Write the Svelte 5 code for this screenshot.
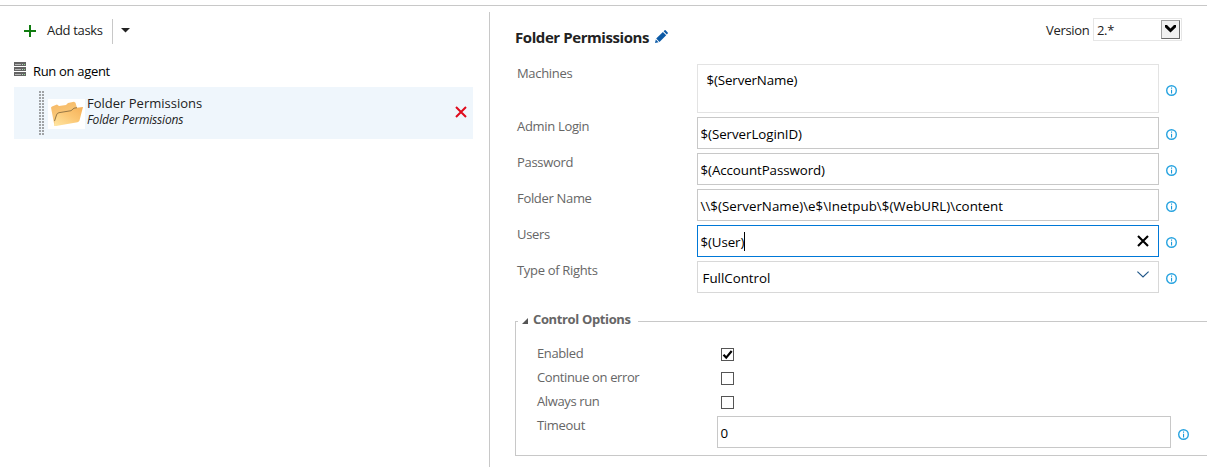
<script>
  const fields = [
    { label: 'Machines', value: '$(ServerName)', kind: 'area', spacing: -0.13 },
    { label: 'Admin Login', value: '$(ServerLoginID)', kind: 'text', spacing: -0.06 },
    { label: 'Password', value: '$(AccountPassword)', kind: 'text', spacing: -0.08 },
    { label: 'Folder Name', value: '\\\\$(ServerName)\\e$\\Inetpub\\$(WebURL)\\content', kind: 'text', spacing: 0.02 },
    { label: 'Users', value: '$(User)', kind: 'focus', spacing: -0.1 },
    { label: 'Type of Rights', value: 'FullControl', kind: 'combo', spacing: 0 }
  ];
  const checks = [
    { label: 'Enabled', on: true },
    { label: 'Continue on error', on: false },
    { label: 'Always run', on: false }
  ];
</script>

{#snippet info()}
  <svg class="info" width="11" height="11" viewBox="0 0 11 11">
    <circle cx="5.5" cy="5.5" r="4.8" fill="#fff" stroke="#27a3e0" stroke-width="1.4" />
    <path d="M5 2.6h1.1v1.2H5zM5 4.8h1.1v3.6H5z" fill="#1c9ad9" />
  </svg>
{/snippet}

<div class="page">
  <aside>
    <div class="toolbar">
      <svg class="plus" width="12" height="12" viewBox="0 0 12 12"><path d="M5 0h2v5h5v2H7v5H5V7H0V5h5z" fill="#107c10" /></svg>
      <span class="add">Add tasks</span>
      <i class="sep"></i>
      <svg class="caret" width="9" height="5" viewBox="0 0 9 5"><path d="M0 0h9L4.5 4.6z" fill="#222" /></svg>
    </div>
    <div class="agent">
      <svg width="12" height="14" viewBox="0 0 12 14" shape-rendering="crispEdges">
        {#each [0, 5, 10] as y}
          <rect x="0" {y} width="12" height="4" fill="#646464" />
          <rect x="1" y={y + 2} width="6" height="1" fill="#b5b5b5" />
          <rect x="8" y={y + 2} width="1" height="1" fill="#b9dcc0" />
          <rect x="10" y={y + 2} width="1" height="1" fill="#8fdc8f" />
        {/each}
      </svg>
      <span>Run on agent</span>
    </div>
    <div class="task">
      <i class="grip"></i>
      <svg class="folder" width="37" height="30" viewBox="0 0 37 30">
        <defs>
          <linearGradient id="back" x2="0.3" y2="1"><stop stop-color="#f6b764" /><stop offset="1" stop-color="#fad184" /></linearGradient>
          <linearGradient id="front" x1="0" y1="1" x2="1" y2="0"><stop stop-color="#ffe7a4" /><stop offset=".55" stop-color="#fbc673" /><stop offset="1" stop-color="#f6b057" /></linearGradient>
        </defs>
        <rect width="37" height="30" fill="#fff" />
        <path d="M3 8.500L4 7.500 9 5.500l2 1.500 7-1 2-2 6-1.200 1.500 1L29 9l-2 12L6.500 27z" fill="url(#back)" />
        <path d="M6 26l3-10q.5-2 2.500-2.300l12-2 3-2.700 8.500-1-3.500 13.500q-.3 1.300-2 1.700L8 27q-2 .3-2-1z" fill="url(#front)" />
        <path d="M6.500 22L8.500 16q.5-2 2.500-2.300l12-2 3-2.500 3-.5" fill="none" stroke="#7d6338" stroke-width=".8" />
      </svg>
      <div class="names"><span>Folder Permissions</span><em>Folder Permissions</em></div>
      <svg class="del" width="12" height="12" viewBox="0 0 12 12"><path d="M1 1l10 10M11 1L1 11" stroke="#e00b1c" stroke-width="2" /></svg>
    </div>
  </aside>

  <main>
    <header>
      <h1>Folder Permissions</h1>
      <svg class="pencil" width="13" height="13" viewBox="0 0 13 13" fill="#0c5aa6">
        <path d="M0 13l.8-3.600 2.800 2.800zM1.200 8.600L7.900 1.900l3.300 3.300-6.700 6.700zM8.600 1.200L9.600.3q.5-.5 1 0l2.100 2.100q.5.5 0 1l-.9 1z" />
      </svg>
      <span class="version">Version</span>
      <div class="select"><span>2.*</span>
        <i class="drop"><svg width="11" height="8" viewBox="0 0 11 8"><path d="M0 0h2l3.500 3.500L9 0h2v2.200L5.500 7.500 0 2.200z" fill="#000" /></svg></i>
      </div>
    </header>

    <div class="form">
      {#each fields as f}
        <div class="row">
          <span class="label">{f.label}</span>
          <div class="box {f.kind}">
            <span class="value" style:letter-spacing="{f.spacing}px">{f.value}</span>
            {#if f.kind === 'focus'}
              <i class="cursor"></i>
              <svg class="end" width="12" height="12" viewBox="0 0 12 12"><path d="M1 1l10 10M11 1L1 11" stroke="#000" stroke-width="2.100" /></svg>
            {:else if f.kind === 'combo'}
              <svg class="end" width="12" height="7" viewBox="0 0 12 7"><path d="M.4.600L6 5.900 11.600.6" fill="none" stroke="#1f5688" stroke-width="1.200" /></svg>
            {/if}
          </div>
          {@render info()}
        </div>
      {/each}
    </div>

    <section>
      <div class="legend">
        <svg width="6" height="6" viewBox="0 0 6 6"><path d="M6 0v6H0z" fill="#555" /></svg>
        <h2>Control Options</h2>
        <i></i>
      </div>
      <div class="options">
        {#each checks as c}
          <div class="check">
            <span class="label">{c.label}</span>
            <i class="tick">
              {#if c.on}<svg width="11" height="11" viewBox="0 0 11 11"><path d="M1.500 5.800l2.700 2.800L9.700 2" fill="none" stroke="#000" stroke-width="2.200" /></svg>{/if}
            </i>
          </div>
        {/each}
        <div class="row timeout">
          <span class="label">Timeout</span>
          <div class="box text"><span class="value">0</span></div>
          {@render info()}
        </div>
      </div>
    </section>
  </main>
</div>

<style>
  :global(body) { background: #fff; overflow: hidden; }
  * { box-sizing: border-box; }
  .page {
    display: grid; grid-template-columns: 489px 718px; width: 1207px; height: 467px;
    padding-top: 5px; color: #222;
    font: 13px/18px "Open Sans", "Noto Sans", sans-serif; letter-spacing: -0.32px;
    background: linear-gradient(#c8c8c8, #c8c8c8) 0 5px / 100% 1px no-repeat;
    white-space: nowrap; overflow: hidden;
  }
  svg { display: block; flex: none; }
  i { display: block; flex: none; }
  aside { padding: 14px 16px 0 14px; }
  .toolbar { display: flex; align-items: center; height: 25px; padding-left: 10px; }
  .toolbar .plus { margin-top: -2px; }
  .caret { margin-top: -2px; }
  .add { width: 65px; margin: -4px 0 0 11px; }
  .sep { width: 1px; height: 25px; background: #c8c8c8; margin: 0 8px 0 0; }
  .agent { display: flex; align-items: center; gap: 7px; height: 18px; margin-top: 18px; color: #000; }
  .agent svg { margin-top: -4px; }
  .task { display: flex; height: 52px; margin-top: 7px; padding: 4px 6px 0 25px; background: #eff6fc; }
  .grip {
    width: 5px; height: 44px;
    background: conic-gradient(from 0deg at 2px 2px, transparent 75%, #a0a3a6 0) 0 0 / 3px 3px;
  }
  .folder { margin: 8px 2px 0 4px; }
  .names { display: flex; flex-direction: column; flex: 1; margin-top: 3px; }
  .names span { letter-spacing: 0; }
  .names em { font-size: 12px; line-height: 16px; letter-spacing: -0.18px; }
  .del { margin-top: 15px; }
  main { border-left: 1px solid #c8c8c8; margin-top: 7px; padding-left: 25px; }
  header { display: flex; height: 52px; padding-top: 6px; }
  h1 { font-size: 15px; line-height: 20px; font-weight: 700; margin: 9px 0 0; width: 140px; letter-spacing: -0.42px; }
  .pencil { margin-top: 12px; }
  .version { margin: 3px 4px 0 378px; width: 43px; }
  .select { display: flex; justify-content: space-between; width: 89px; height: 23px; border: 1px solid #e6e6e6; padding: 1px 1px 0 3px; }
  .select span { margin-top: 1px; }
  .drop { width: 19px; height: 19px; background: #f0f0f0; border: 1px solid #a0a0a0; border-right-color: #666; border-bottom-color: #666; padding: 4px 3px; }
  .form { display: flex; flex-direction: column; gap: 4px; padding-left: 2px; }
  .row { display: flex; align-items: center; }
  .label { align-self: flex-start; width: 180px; color: #666; }
  .box { display: flex; align-items: center; width: 462px; height: 32px; border: 1px solid #c8c8c8; color: #000; padding: 2px 9px 0 2.5px; }
  .value { font-size: 13.33px; }
  .area { height: 49px; border-color: #e3e3e3; padding: 6px 0 0 8.5px; align-items: flex-start; }
  .focus { border-color: #0078d7; }
  .combo { border-color: #d8d8d8; padding-left: 4.5px; }
  .cursor { width: 1px; height: 19px; background: #000; margin-top: -2px; }
  .end { margin: -3px 0 0 auto; }
  .combo .end { margin-top: -7px; }
  .info { margin: 3px 0 0 7px; }
  section { height: 143px; margin-top: 20px; }
  .legend { display: flex; align-items: center; height: 16px; padding-left: 7px; position: relative; }
  h2 { margin: -5px 0 0 5px; width: 105px; font-size: 13px; line-height: 16px; font-weight: 700; color: #666; letter-spacing: -0.36px; }
  .legend i { flex: 1; height: 1px; background: #c8c8c8; }
  .legend::before { content: ""; position: absolute; left: 0; top: 8px; width: 2px; height: 8px; border: 1px solid #c8c8c8; border-width: 1px 0 0 1px; }
  .options { height: 127px; border: solid #c8c8c8; border-width: 0 0 1px 1px; padding: 15px 0 0 21px; }
  .check { display: flex; height: 24px; }
  .check .label { width: 184px; letter-spacing: -0.38px; }
  .tick { width: 13px; height: 13px; border: 1px solid #555; margin-top: 4px; }
  .timeout .box { width: 454px; }
  .timeout .info { margin-top: 4px; }
</style>
